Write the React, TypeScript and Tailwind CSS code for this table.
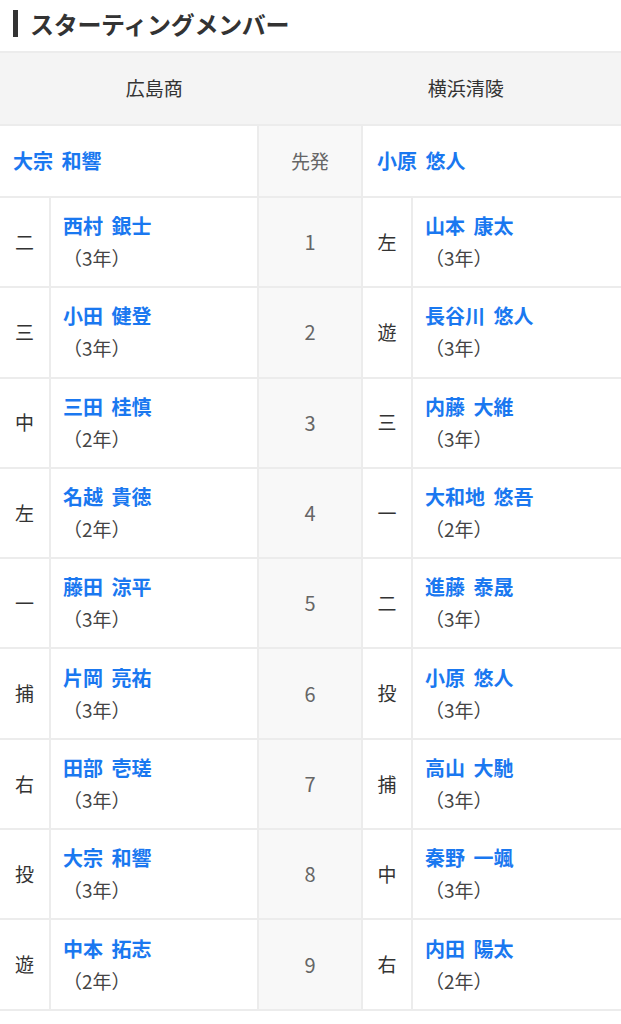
import React from 'react';

type Player = { pos: string; name: string; grade: string };

const home: Player[] = [
  { pos: '二', name: '西村 銀士', grade: '3' },
  { pos: '三', name: '小田 健登', grade: '3' },
  { pos: '中', name: '三田 桂慎', grade: '2' },
  { pos: '左', name: '名越 貴徳', grade: '2' },
  { pos: '一', name: '藤田 涼平', grade: '3' },
  { pos: '捕', name: '片岡 亮祐', grade: '3' },
  { pos: '右', name: '田部 壱瑳', grade: '3' },
  { pos: '投', name: '大宗 和響', grade: '3' },
  { pos: '遊', name: '中本 拓志', grade: '2' },
];

const away: Player[] = [
  { pos: '左', name: '山本 康太', grade: '3' },
  { pos: '遊', name: '長谷川 悠人', grade: '3' },
  { pos: '三', name: '内藤 大維', grade: '3' },
  { pos: '一', name: '大和地 悠吾', grade: '2' },
  { pos: '二', name: '進藤 泰晟', grade: '3' },
  { pos: '投', name: '小原 悠人', grade: '3' },
  { pos: '捕', name: '高山 大馳', grade: '3' },
  { pos: '中', name: '秦野 一颯', grade: '3' },
  { pos: '右', name: '内田 陽太', grade: '2' },
];

const font = { fontFamily: '"Noto Sans CJK JP", "Noto Sans", sans-serif' };

const NameCell: React.FC<{ p: Player }> = ({ p }) => (
  <div className="bg-white flex flex-col justify-center pl-3 leading-8">
    <span className="text-[#1a78f0] font-bold text-[20px] [word-spacing:4px]">{p.name}</span>
    <span className="text-[#444] text-[19px]">（{p.grade}年）</span>
  </div>
);

const App: React.FC = () => {
  return (
    <div className="w-[621px] bg-white" style={font}>
      <h2 className="h-[51px] flex items-center pl-[13px] pb-[4px]">
        <span className="w-[5px] h-[27px] bg-[#333] mr-[12px]" />
        <span className="text-[24px] font-bold text-[#333] tracking-[-0.3px]">スターティングメンバー</span>
      </h2>

      <div className="bg-[#ececec] flex flex-col gap-[2px] py-[2px]">
        {/* teams */}
        <div className="grid grid-cols-2 h-[71px] bg-[#f4f4f4] text-[19px] text-[#333]">
          <div className="flex items-center justify-center pr-[2px]">広島商</div>
          <div className="flex items-center justify-center">横浜清陵</div>
        </div>

        {/* starting pitchers */}
        <div className="grid grid-cols-[257px_102px_1fr] gap-x-[2px] h-[70px] text-[19px]">
          <div className="bg-white flex items-center pl-[13px] font-bold text-[20px] text-[#1a78f0] [word-spacing:4px]">大宗 和響</div>
          <div className="bg-[#f8f8f8] flex items-center justify-center text-[#666]">先発</div>
          <div className="bg-white flex items-center pl-[14px] font-bold text-[20px] text-[#1a78f0] [word-spacing:4px]">小原 悠人</div>
        </div>

        {home.map((h, i) => (
          <div
            key={i}
            className="grid grid-cols-[49px_206px_102px_48px_1fr] gap-x-[2px] h-[88.3px] text-[19px]"
          >
            <div className="bg-white flex items-center justify-center text-[#333]">{h.pos}</div>
            <NameCell p={h} />
            <div className="bg-[#f8f8f8] flex items-center justify-center text-[#666] text-[20px]">{i + 1}</div>
            <div className="bg-white flex items-center justify-center text-[#333]">{away[i].pos}</div>
            <NameCell p={away[i]} />
          </div>
        ))}
      </div>
    </div>
  );
};

export default App;
